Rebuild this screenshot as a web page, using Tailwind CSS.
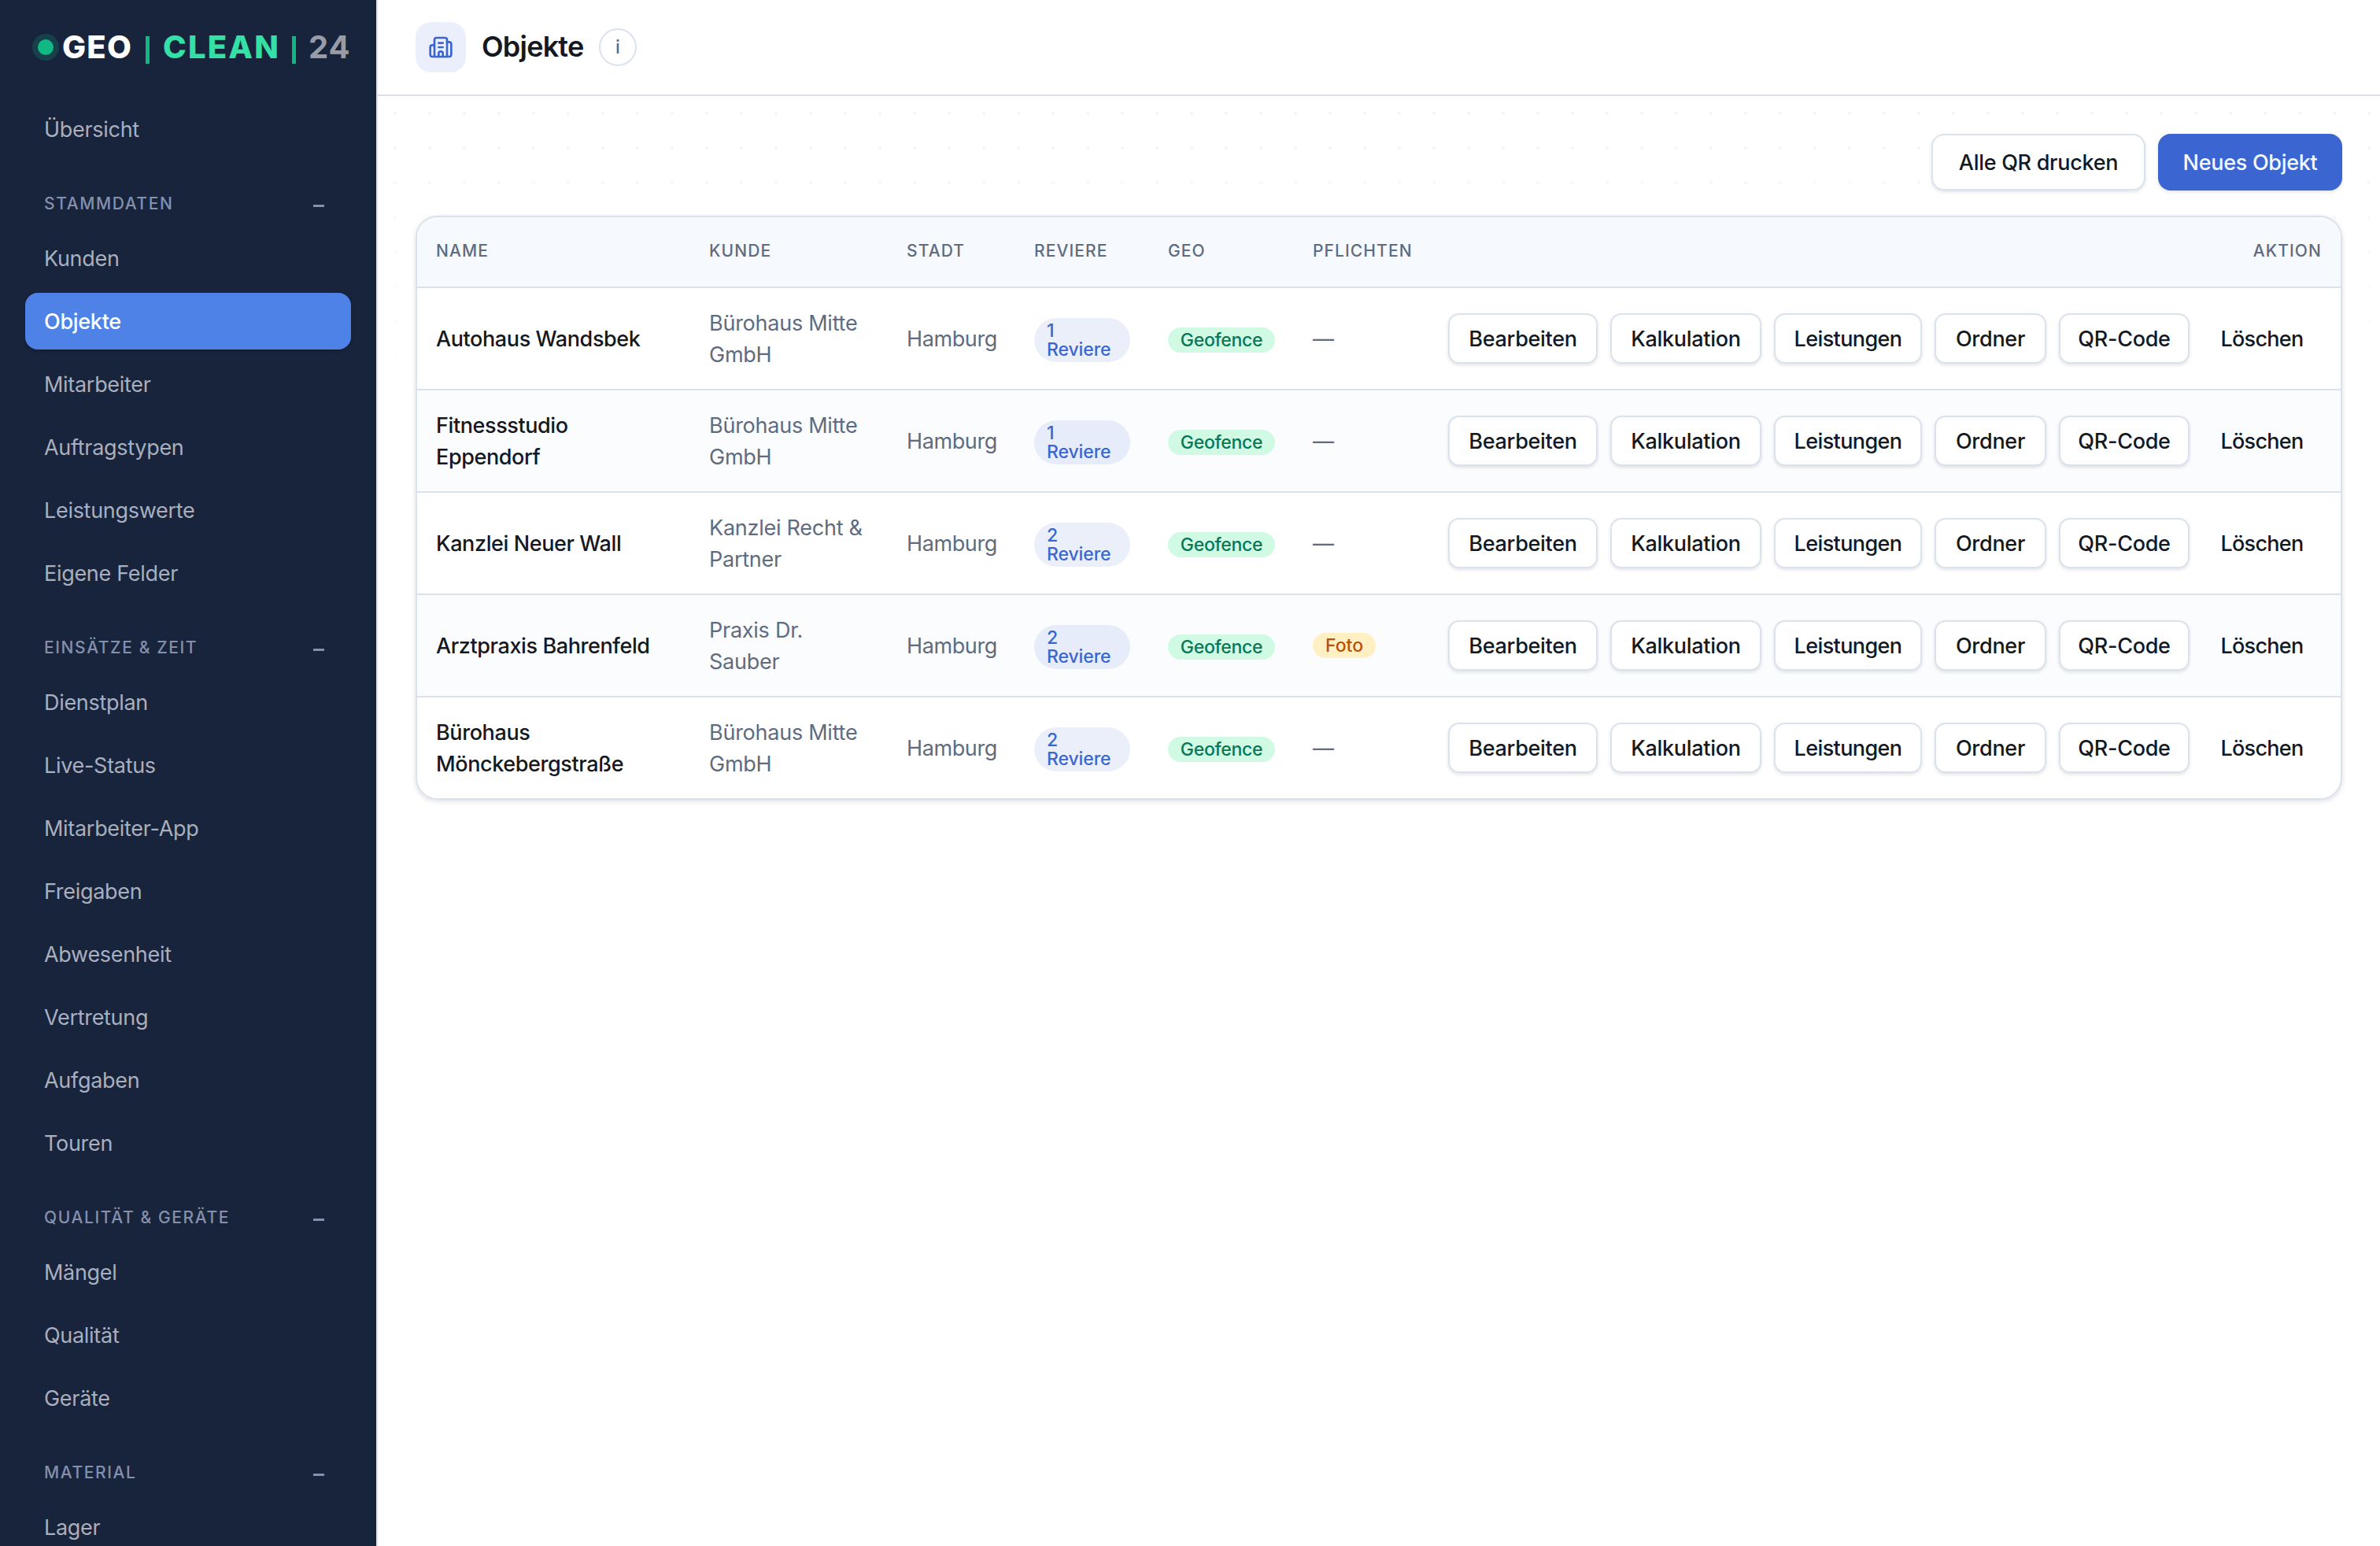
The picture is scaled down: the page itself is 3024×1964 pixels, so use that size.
<!DOCTYPE html>
<html lang="de">

<head>
    <meta charset="UTF-8">
    <meta name="viewport" content="width=device-width, initial-scale=1.0">
    <title>Objekte</title>
    <script src="https://cdn.jsdelivr.net/npm/@tailwindcss/browser@4"></script>
</head>

<body class="bg-white font-['Inter',sans-serif] text-[27px] text-[#141821] antialiased">
    <div class="flex h-[1964px] w-[3024px] overflow-hidden">

        <!-- sidebar -->
        <aside class="w-[480px] shrink-0 overflow-hidden border-r-2 border-[#dce2ed] bg-[#18233c]">
            <div class="flex h-[120px] items-center pl-[48px] text-[40px] font-extrabold whitespace-nowrap text-white">
                <span class="mr-[11px] h-5 w-5 shrink-0 rounded-full bg-[#10b981] ring-7 ring-[#10b981]/20"></span>
                <span class="w-[106px] tracking-[1.2px]">GEO</span>
                <span class="mt-[7px] h-[35px] w-[5px] bg-[#10b981]"></span>
                <span class="ml-[17px] w-[164px] tracking-[2.2px] text-[#34e0a6]">CLEAN</span>
                <span class="mt-[7px] h-[35px] w-[5px] bg-[#10b981]"></span>
                <span class="ml-[16px] font-bold tracking-[1px] text-[#999ca6]">24</span>
            </div>
            <nav id="nav" class="px-8 pt-2"></nav>
        </aside>

        <div class="flex flex-1 flex-col">
            <!-- top bar -->
            <header class="flex h-[122px] shrink-0 items-center border-b-2 border-[#dce0ec] bg-white px-12">
                <div class="flex h-16 w-16 items-center justify-center rounded-[20px] bg-[#ebeffb] text-[#3b66d1]">
                    <svg class="h-8 w-8" viewBox="0 0 24 24" fill="none" stroke="currentColor" stroke-width="2" stroke-linecap="round" stroke-linejoin="round">
                        <path d="M10 12h4" />
                        <path d="M10 8h4" />
                        <path d="M14 21v-3a2 2 0 0 0-4 0v3" />
                        <path d="M6 10H4a2 2 0 0 0-2 2v7a2 2 0 0 0 2 2h16a2 2 0 0 0 2-2V9a2 2 0 0 0-2-2h-2" />
                        <path d="M6 21V5a2 2 0 0 1 2-2h8a2 2 0 0 1 2 2v16" />
                    </svg>
                </div>
                <h1 class="ml-5 pb-[2px] text-[36px] font-semibold tracking-[-0.8px]">Objekte</h1>
                <button class="ml-[20px] flex h-12 w-12 items-center justify-center rounded-full border-2 border-[#dce2ed] pr-px text-[23px] font-medium text-[#5f6b7e]">i</button>
            </header>

            <main class="flex-1 bg-[linear-gradient(to_bottom,transparent,#fff_420px),radial-gradient(circle,#f4f5f9_2px,transparent_2.5px)] bg-[length:auto,44px_44px] px-12 pt-12">
                <div class="flex justify-end gap-4 font-medium tracking-[-0.3px]">
                    <button class="h-[72px] w-[272px] rounded-2xl border-2 border-[#dce2ed] bg-white pt-[2px] shadow-[0_2px_4px_rgba(20,24,33,0.12)]">Alle QR drucken</button>
                    <button class="h-[72px] w-[234px] rounded-2xl bg-[#3b66d1] pt-[2px] text-[#f5f8ff] shadow-[0_2px_4px_rgba(20,24,33,0.12)]">Neues Objekt</button>
                </div>

                <!-- objects -->
                <div class="mt-8 overflow-hidden rounded-[28px] border-2 border-[#dce2ed] bg-white shadow-[0_2px_6px_rgba(20,24,33,0.14)]">
                    <table class="w-full table-fixed text-left">
                        <thead class="bg-[#f6f9fe] text-[21px] tracking-[1.1px] text-[#5f6b7e]">
                            <tr class="h-[89px] border-b-2 border-[#dce2ed]">
                                <th class="w-[346px] px-6 pb-[2px] font-medium">NAME</th>
                                <th class="w-[252px] pr-6 pb-[2px] pl-[25px] font-medium">KUNDE</th>
                                <th class="w-[162px] px-6 pb-[2px] font-medium">STADT</th>
                                <th class="w-[170px] px-6 pb-[2px] font-medium">REVIERE</th>
                                <th class="w-[184px] px-6 pb-[2px] font-medium">GEO</th>
                                <th class="w-[172px] px-6 pb-[2px] font-medium">PFLICHTEN</th>
                                <th class="px-6 pb-[2px] text-right font-medium">AKTION</th>
                            </tr>
                        </thead>
                        <tbody id="rows"></tbody>
                    </table>
                </div>
            </main>
        </div>
    </div>

    <script>
        const active = 'Objekte';
        const groups = [
            ['', ['Übersicht']],
            ['STAMMDATEN', ['Kunden', 'Objekte', 'Mitarbeiter', 'Auftragstypen', 'Leistungswerte', 'Eigene Felder']],
            ['EINSÄTZE & ZEIT', ['Dienstplan', 'Live-Status', 'Mitarbeiter-App', 'Freigaben', 'Abwesenheit', 'Vertretung', 'Aufgaben', 'Touren']],
            ['QUALITÄT & GERÄTE', ['Mängel', 'Qualität', 'Geräte']],
            ['MATERIAL', ['Lager']]
        ];

        document.getElementById('nav').innerHTML = groups.map(([title, items]) => `
            ${title ? `<div class="flex h-[92px] items-center justify-between pt-[26px] pr-[34px] pl-6 text-[21px] font-medium tracking-[1.6px] text-[#8490ac]">
                <span>${title.replace('&', '&amp;')}</span>
                <span class="mt-1 h-[3px] w-[14px] bg-[#8490ac]"></span>
            </div>` : ''}
            <div class="flex flex-col gap-2">
                ${items.map(item => `<a class="flex h-[72px] items-center rounded-2xl px-6 pt-[2px] tracking-[-0.3px] ${item == active ? 'bg-[#4f82e6] font-medium text-white shadow-[0_2px_4px_rgba(0,0,0,0.15)]' : 'text-[#a8afbf]'}">${item}</a>`).join('')}
            </div>`).join('');

        // name, customer, number of areas, duty
        const objects = [
            ['Autohaus Wandsbek', 'Bürohaus Mitte<br>GmbH', 1, ''],
            ['Fitnessstudio<br>Eppendorf', 'Bürohaus Mitte<br>GmbH', 1, ''],
            ['Kanzlei Neuer Wall', 'Kanzlei Recht &amp;<br>Partner', 2, ''],
            ['Arztpraxis Bahrenfeld', 'Praxis Dr.<br>Sauber', 2, 'Foto'],
            ['Bürohaus<br>Mönckebergstraße', 'Bürohaus Mitte<br>GmbH', 2, '']
        ];
        const actionButton = 'h-16 rounded-[14px] border-2 border-[#dce2ed] bg-white pt-[2px] shadow-[0_2px_4px_rgba(20,24,33,0.12)]';

        document.getElementById('rows').innerHTML = objects.map(([name, customer, areas, duty]) => `
            <tr class="h-[130px] border-b-2 border-[#dce2ed] leading-[40px] whitespace-nowrap text-[#5f6b7e] last:h-[129px] last:border-b-0 even:bg-[#fafcfe]">
                <td class="px-6 pt-[2px] font-medium tracking-[-0.4px] text-[#141821]">${name}</td>
                <td class="pt-[2px] pr-6 pl-[25px] tracking-[-0.25px]">${customer}</td>
                <td class="px-6 pt-[2px] tracking-[-0.4px]">Hamburg</td>
                <td class="px-6"><div class="mt-[3px] w-[122px] rounded-[28px] bg-[#3b66d1]/10 px-4 py-1 text-[23px] leading-[24px] font-medium tracking-[-0.1px] text-[#3b66d1]">${areas}<br>Reviere</div></td>
                <td class="px-6"><div class="mt-[3px] flex h-8 w-[136px] items-center justify-center rounded-full bg-[#d1fae5] text-[23px] font-medium tracking-[-0.3px] text-[#047857]">Geofence</div></td>
                <td class="px-6">${duty ? `<div class="flex h-8 w-[80px] items-center justify-center rounded-full bg-[#fef0c3] text-[23px] font-medium text-[#b45309]">${duty}</div>` : '<span class="relative top-px">—</span>'}</td>
                <td class="px-6">
                    <div class="flex gap-4 font-medium tracking-[-0.3px] text-[#141821]">
                        <button class="w-[190px] ${actionButton}">Bearbeiten</button>
                        <button class="w-[192px] ${actionButton}">Kalkulation</button>
                        <button class="w-[188px] tracking-[-0.6px] ${actionButton}">Leistungen</button>
                        <button class="w-[142px] ${actionButton}">Ordner</button>
                        <button class="w-[166px] ${actionButton}">QR-Code</button>
                        <button class="h-16 w-[152px] pt-[2px] tracking-[-0.7px]">Löschen</button>
                    </div>
                </td>
            </tr>`).join('');
    </script>

</body>

</html>
